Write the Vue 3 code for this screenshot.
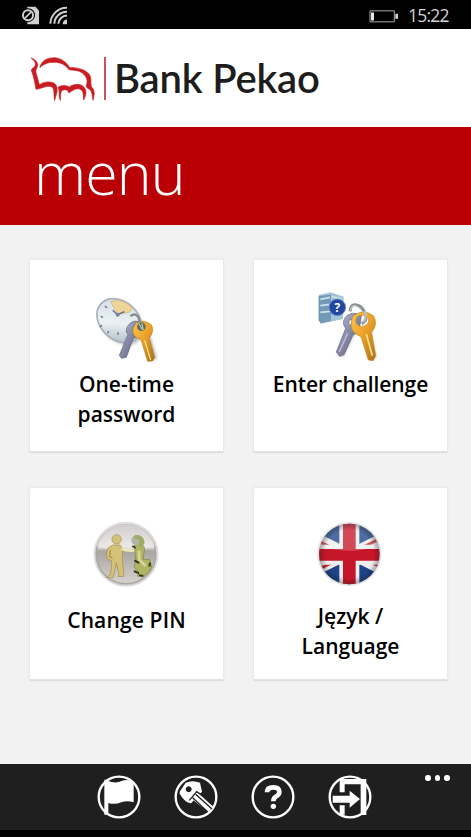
<template>
  <div class="phone">
    <header class="status">
      <svg class="signal" viewBox="60 15 147 62">
        <path d="M82 20h25l10 12v40H82z" fill="#d0d0d0" />
        <circle cx="84" cy="45" r="21" fill="#000" />
        <circle cx="84" cy="45" r="15" fill="none" stroke="#d0d0d0" stroke-width="6" />
        <path d="M75 54l18-18" stroke="#d0d0d0" stroke-width="5" />
        <g fill="none" stroke="#d0d0d0" stroke-width="6">
          <path d="M151 71A49 49 0 0 1 201 23" />
          <path d="M163 71A37 37 0 0 1 201 35" />
          <path d="M175 71A26 26 0 0 1 201 46" />
        </g>
        <path d="M188 72a13 13 0 0 1 13-14v14z" fill="#d0d0d0" />
      </svg>
      <svg class="battery" viewBox="0 0 90 38">
        <path d="M3 2h73v33H3z" fill="none" stroke="#a8a8a8" stroke-width="3" />
        <path d="M6 7h9v24H6z" fill="#e6e6e6" />
        <path d="M79 11h8v15h-8z" fill="#d0d0d0" />
      </svg>
      <span class="time">15:22</span>
    </header>

    <div class="brand">
      <svg class="bison" viewBox="90 165 201 141">
        <g fill="#c91c22" stroke="#c91c22" stroke-width="2" stroke-linejoin="round">
          <path d="M93 174C103 177 112 184 113 194C113 204 106 208 108 218C112 232 116 245 118 254C131 246 143 244 155 247C169 250 173 261 171 276L164 301C160 288 165 270 157 262C145 254 130 264 108 268C105 251 102 232 94 211C95 203 105 204 106 194C107 185 101 180 93 174Z" />
          <path d="M120 203C122 185 138 173 164 173C187 175 199 188 210 203C234 202 256 209 267 222C276 234 271 247 274 260C282 267 286 276 279 301C276 288 278 277 269 268C258 264 257 257 261 249C263 238 257 227 247 219C238 211 224 211 207 209C194 193 182 187 162 187C145 186 135 192 126 197Z" />
          <path d="M174 262C183 255 197 254 208 261C220 252 238 250 248 258C260 267 261 282 251 300C250 286 251 275 243 269C232 262 220 269 207 279C203 268 194 267 185 272C181 280 182 290 181 301C174 288 181 274 174 262Z" />
        </g>
      </svg>
      <i class="divider"></i>
      <span class="name">Bank Pekao</span>
    </div>

    <h1 class="title"><span>menu</span></h1>

    <main class="grid">
      <button v-for="item in items" :key="item.id" type="button" class="card" :class="item.id">
        <svg v-if="item.id === 'otp'" class="pic" viewBox="0 0 300 270">
          <defs>
            <linearGradient id="dial" x1="0" y1="0" x2="1" y2="1">
              <stop offset="0" stop-color="#cfd8e2" /><stop offset=".55" stop-color="#eaf1f4" /><stop offset="1" stop-color="#9eabb8" />
            </linearGradient>
            <linearGradient id="gold" x1="0" y1="0" x2="1" y2="1">
              <stop offset="0" stop-color="#ffc64a" /><stop offset=".5" stop-color="#e9a02a" /><stop offset="1" stop-color="#a5711a" />
            </linearGradient>
            <linearGradient id="steel" x1="0" y1="0" x2="1" y2="1">
              <stop offset="0" stop-color="#bec3dc" /><stop offset=".5" stop-color="#8587a4" /><stop offset="1" stop-color="#55566d" />
            </linearGradient>
            <filter id="soft" x="-30%" y="-30%" width="170%" height="170%"><feGaussianBlur stdDeviation="4" /></filter>
          </defs>
          <ellipse cx="123" cy="129" rx="76" ry="56" transform="rotate(43 123 129)" fill="#888" opacity=".5" filter="url(#soft)" />
          <ellipse cx="118" cy="122" rx="75" ry="57" transform="rotate(43 118 122)" fill="url(#dial)" stroke="#a9b0b8" stroke-width="5" />
          <path d="M113 104L92 65Q128 53 157 84L150 96Z" fill="#efd49a" stroke="#d0b26f" stroke-width="2" />
          <path d="M113 104l-15-13M113 104l20-9" stroke="#5c6f93" stroke-width="4" />
          <circle cx="113" cy="104" r="6" fill="#7287a8" />
          <path d="M62 109l7 3M59 140l7-4M83 160l3-7M114 165v-8M75 78l6 6M143 158l-4-6" stroke="#667084" stroke-width="4" />
          <path d="M151 169l-21 59M199 159l25 79" stroke="#555" stroke-width="15" opacity=".45" filter="url(#soft)" />
          <path d="M144 137q15-20 34-11l-5 43-14 7-20 56-15 3-6-9 26-62q-10-12 0-27z" fill="url(#steel)" stroke="#626681" stroke-width="2" />
          <path d="M169 128q25-12 46 8 8 19-7 38l16 59-6 10-15 1-20-65q-31-11-23-36z" fill="url(#gold)" stroke="#b67f24" stroke-width="2" />
          <path d="M194 181l18 59" stroke="#ffe083" stroke-width="4" />
          <circle cx="184" cy="140" r="13" fill="#5d7263" />
          <path d="M176 130l12 20M185 130l5 19" stroke="#d4dccb" stroke-width="3" />
          <path d="M151 108q23-15 28 20" fill="none" stroke="#858d91" stroke-width="7" />
        </svg>

        <svg v-else-if="item.id === 'challenge'" class="pic" viewBox="0 0 300 270">
          <path d="M105 226l38-78M205 235l-29-93" stroke="#555" stroke-width="20" opacity=".45" filter="url(#soft)" />
          <path d="M41 45l36-8 39 13-2 67-66 14-7-10z" fill="#a5c3d7" />
          <path d="M41 48l37-4v79l-31 7-6-9z" fill="#7199b6" />
          <path d="M46 58l29-6M46 77l29-4M46 97l29-3M80 50l31 7" stroke="#c9e0ee" stroke-width="5" />
          <circle cx="97" cy="82" r="25" fill="#2447a0" stroke="#6f8fcb" stroke-width="3" />
          <text x="97" y="95" class="mark">?</text>
          <path d="M136 94c-3-31 32-23 43 3q12 24-9 34" fill="none" stroke="#8c9392" stroke-width="9" />
          <path d="M137 91c0-22 25-16 34 7" fill="none" stroke="#dce2df" stroke-width="3" />
          <path fill-rule="evenodd" d="M121 112q20-22 48-5l-7 50-18 8-27 59-13 5-10-13 28-71q-13-16-1-33zM134 119q-8 14 7 17 13-14-7-17z" fill="url(#steel)" stroke="#646680" stroke-width="2" />
          <path fill-rule="evenodd" d="M148 106q28-21 58 2 14 26-6 49l12 70-7 15-15-2-22-70q-38-14-27-51 0-9 7-13zM156 110q-12 22 12 30 25-2 23-24-15-17-35-6z" fill="url(#gold)" stroke="#c78a24" stroke-width="2" />
          <path d="M184 163l18 64" stroke="#ffe18a" stroke-width="5" />
          <path d="M128 160l-25 55" stroke="#c0c0df" stroke-width="4" />
          <path d="M178 93q10 15-4 34" fill="none" stroke="#bcc2b9" stroke-width="7" />
        </svg>

        <svg v-else-if="item.id === 'pin'" class="pic" viewBox="0 0 300 270">
          <defs>
            <linearGradient id="orb" x1="0" y1="0" x2="0" y2="1">
              <stop offset="0" stop-color="#b3afad" /><stop offset=".38" stop-color="#e8e5e2" /><stop offset=".45" stop-color="#a8a4a0" /><stop offset="1" stop-color="#d7d4d0" />
            </linearGradient>
          </defs>
          <circle cx="138" cy="133" r="95" fill="#c6c3c2" stroke="#e0dddd" stroke-width="5" />
          <circle cx="138" cy="132" r="89" fill="url(#orb)" stroke="#aaa6a5" stroke-width="4" />
          <path d="M50 108a90 90 0 0 1 176 0q-87 31-176 0z" fill="#eeeceb" opacity=".5" />
          <g fill="#d3c277" stroke="#a38e47" stroke-width="2" stroke-linejoin="round">
            <path d="M98 105l-13 8-6 16 4 20 11 2 1 19-4 24-11 8 20 1 9-45 8 33-3 9 18-1-5-51 1-31-8-12z" />
            <circle cx="110" cy="88" r="14" />
          </g>
          <path d="M91 120l-2 20 9 4" fill="none" stroke="#9a873f" stroke-width="3" />
          <path d="M124 117q20 8 44 4" fill="none" stroke="#eee6b8" stroke-width="7" />
          <path d="M163 106q22-10 31 8l-5 34 20 1 6 22-10 17-15 11-18-1 4-10-14-18 6-16z" fill="#b0b563" stroke="#7e843f" stroke-width="2" />
          <ellipse cx="170" cy="91" rx="16" ry="15" fill="#b0b5a9" />
          <path d="M164 76q26-6 30 22l-7 13-11-5 2-16-15-5z" fill="#a1aa64" />
          <path d="M157 108l10 6M163 151l15 8M162 183l15 7M177 196l13 2M210 158l-2 12" stroke="#373a20" stroke-width="6" />
          <path d="M177 122l1 28 19 18" fill="none" stroke="#d5d69a" stroke-width="8" />
        </svg>

        <svg v-else class="pic" viewBox="0 0 300 270">
          <defs>
            <clipPath id="ball"><circle cx="133" cy="132" r="91" /></clipPath>
            <radialGradient id="shade" cx=".5" cy=".5" r=".5">
              <stop offset=".8" stop-color="#000" stop-opacity="0" /><stop offset="1" stop-color="#222" stop-opacity=".35" />
            </radialGradient>
          </defs>
          <circle cx="133" cy="132" r="96" fill="#e2e2e2" />
          <g clip-path="url(#ball)">
            <path d="M40 38h190v190H40z" fill="#1d4488" />
            <path d="M13 72l240 120M13 192L253 72" stroke="#eee" stroke-width="28" />
            <path d="M13 80l120 60M253 72L133 132M13 192l120-60M133 124l120 60" stroke="#c62735" stroke-width="9" />
            <path d="M103 38h60v190h-60zM40 104h190v60H40z" fill="#f0eeee" />
            <path d="M114 38h38v190h-38zM40 117h190v35H40z" fill="#c6162a" />
            <path d="M35 106Q133 138 231 106V35H35z" fill="#fff" opacity=".22" />
            <circle cx="133" cy="132" r="91" fill="url(#shade)" />
          </g>
        </svg>

        <span class="label">
          <span v-for="line in item.lines" :key="line">{{ line }}</span>
        </span>
      </button>
    </main>

    <footer class="appbar">
      <nav class="actions">
        <svg viewBox="0 0 132 132">
          <circle cx="66" cy="66" r="61" />
          <path class="solid" d="M22 14h12v105H22zM34 18q22 9 42-1 18-6 34 5v60q-19-7-37 0-20 8-39 2z" />
        </svg>
        <svg viewBox="0 0 132 132">
          <circle cx="66" cy="66" r="61" />
          <path class="solid" fill-rule="evenodd" d="M17 50l18-27q20-9 43 0l6 27-33 35q-19-3-34-29zM44 34a9 9 0 1 0 .1 0z" />
          <path class="solid" d="M50 69l18-19 50 45-16 17z" />
          <path class="cut" d="M56 68l45 43M65 58l49 44M46 76l22-26 17 11" />
        </svg>
        <svg viewBox="0 0 132 132">
          <circle cx="66" cy="66" r="61" />
          <path class="question" d="M48 52q0-15 19-15 18 0 18 14 0 8-9 13-9 4-9 15" />
          <circle class="solid" cx="67" cy="94" r="8" />
        </svg>
        <svg viewBox="0 0 132 132">
          <circle cx="66" cy="66" r="61" />
          <path class="solid" d="M35 12h80v108H98V28H50v24H35zM35 91h15v28H35zM14 62h51V47l31 25-31 26V83H14z" />
        </svg>
      </nav>
      <div class="more"><i></i><i></i><i></i></div>
    </footer>
  </div>
</template>

<script setup>
const items = [
  { id: 'otp', lines: ['One-time', 'password'] },
  { id: 'challenge', lines: ['Enter challenge'] },
  { id: 'pin', lines: ['Change PIN'] },
  { id: 'lang', lines: ['Język /', 'Language'] }
]
</script>

<style>
body {
  background: #000;
}
</style>

<style scoped>
.phone {
  display: flex;
  flex-direction: column;
  width: 471px;
  height: 837px;
  overflow: hidden;
  background: #f2f2f2;
  font-family: "Open Sans", "Noto Sans", sans-serif;
}

/* status bar */
.status {
  display: flex;
  flex: none;
  box-sizing: border-box;
  height: 29px;
  padding-left: 20px;
  background: #000;
}
.signal {
  width: 49px;
  height: 21px;
  margin-top: 5px;
}
.battery {
  width: 30px;
  height: 13px;
  margin: 10px 0 0 300px;
}
.time {
  margin: 2px 0 0 9px;
  color: #d2d2d2;
  font-size: 17.5px;
  line-height: 26px;
  letter-spacing: -0.75px;
}

/* logo */
.brand {
  display: flex;
  flex: none;
  box-sizing: border-box;
  height: 98px;
  padding: 26px 0 0 30px;
  background: #fff;
}
.bison {
  width: 67px;
  height: 47px;
}
.divider {
  width: 2px;
  height: 43px;
  margin: 2px 0 0 7px;
  background: #c8515b;
}
.name {
  margin: -1px 0 0 8px;
  color: #1d1d1d;
  font: 600 40px/48px Lato, sans-serif;
  letter-spacing: -0.2px;
  white-space: nowrap;
}

.title {
  flex: none;
  box-sizing: border-box;
  height: 98px;
  margin: 0;
  padding: 5px 0 0 34px;
  background: #b90005;
  color: #fff;
  font-size: 59px;
  font-weight: 300;
  line-height: 80px;
  letter-spacing: -0.9px;
}

/* tiles */
.grid {
  display: grid;
  grid-template-columns: 193px 193px;
  grid-template-rows: 191px 191px;
  gap: 37px 31px;
  flex: none;
  box-sizing: border-box;
  height: 539px;
  padding: 35px 0 0 30px;
}
.card {
  display: flex;
  flex-direction: column;
  align-items: center;
  padding: 20px 0 0;
  border: 0;
  background: #fff;
  box-shadow: 0 0 2px 1px #e6e6e6, 0 2px 1px #dadada;
  color: #000;
  font-family: inherit;
}
.pic {
  flex: none;
  width: 100px;
  height: 90px;
  margin-left: 7px;
}
.lang .pic,
.challenge .pic {
  margin-left: 9px;
}
.label {
  display: flex;
  flex-direction: column;
  font-size: 21px;
  font-weight: 600;
  line-height: 29.5px;
  text-align: center;
  white-space: nowrap;
}
.challenge .label {
  letter-spacing: -0.1px;
}
.pin,
.lang {
  padding-top: 22px;
}
.pin .label {
  margin-top: 6px;
  letter-spacing: 0.15px;
}
.lang .label {
  margin-top: 2px;
}
.mark {
  fill: #fff;
  font-size: 36px;
  font-weight: 700;
  text-anchor: middle;
}

/* bottom bar */
.appbar {
  display: flex;
  flex: none;
  box-sizing: border-box;
  height: 73px;
  padding: 11px 0 0 97px;
  border-bottom: 7px solid #000;
  background: #1f1f1f;
}
.actions {
  display: flex;
  gap: 33px;
}
.actions svg {
  width: 44px;
  height: 44px;
}
.actions circle {
  fill: none;
  stroke: #fff;
  stroke-width: 7;
}
.actions .solid {
  fill: #fff;
  stroke: none;
}
.actions .cut {
  fill: none;
  stroke: #1f1f1f;
  stroke-width: 4;
}
.actions .question {
  fill: none;
  stroke: #fff;
  stroke-width: 14;
}
.more {
  display: flex;
  gap: 4px;
  margin-left: 53px;
}
.more i {
  width: 5.5px;
  height: 5.5px;
  border-radius: 50%;
  background: #fff;
}
</style>
